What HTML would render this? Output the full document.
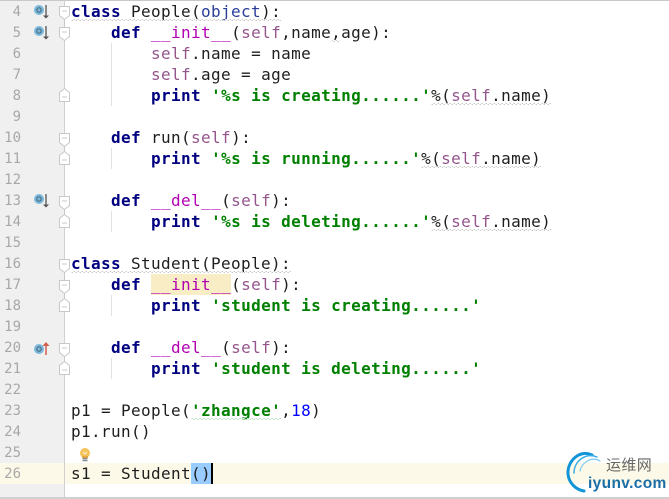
<!DOCTYPE html>
<html><head><meta charset="utf-8">
<style>
html,body{margin:0;padding:0;background:#fff;width:669px;height:499px;overflow:hidden}
#g{position:absolute;left:0;top:0;width:64px;height:497px;background:#f0f0f0;border-right:1px solid #d0d0d0}
#top{position:absolute;left:0;top:0;width:669px;height:1px;background:#c8c8c8}
#bot{position:absolute;left:0;top:497px;width:669px;height:2px;background:#d0d0d0}
#cur{position:absolute;left:65px;top:463px;width:604px;height:21px;background:#fdf9e8}
#curg{position:absolute;left:0;top:463px;width:64px;height:21px;background:#fdf9e8}
.n,.l{position:absolute;height:21px;white-space:pre}
.n{left:0;width:21px;text-align:right;font:14px/23px "DejaVu Sans Mono",monospace;color:#a8a8a8}
.l{left:71px;font-family:"DejaVu Sans Mono",monospace;font-size:16px;line-height:22px;letter-spacing:.37px;color:#1e1e1e}
.k{color:#000080;font-weight:bold}
.s{color:#008000;font-weight:bold}
.m{color:#b200b2}
.f{color:#94558d}
.o{color:#2a3d9a}
.d{color:#0000ff}
.i{position:absolute;left:111px;width:1px;background:#e2e2e2}
#hl{position:absolute;left:151px;top:274px;width:80px;height:21px;background:#f8edc5}
#br{position:absolute;left:191px;top:463px;width:20px;height:21px;background:#99ccff}
#car{position:absolute;left:211px;top:463px;width:2px;height:21px;background:#000}
svg{position:absolute;overflow:visible}
.logo1{position:absolute;left:606px;top:456px;font:15px/18px "Noto Sans CJK SC",sans-serif;color:#666;letter-spacing:.4px}
.logo2{position:absolute;left:588px;top:475px;font:bold 15.500px/18px "Liberation Sans",sans-serif;color:#1a6ea6;letter-spacing:.35px}
</style></head><body>
<div id="cur"></div>
<div id="g"></div>
<div id="curg"></div>
<div id="top"></div>
<div id="bot"></div>
<div id="hl"></div>
<div id="br"></div>
<div id="car"></div>
<div class="i" style="top:43px;height:63px"></div>
<div class="i" style="top:148px;height:21px"></div>
<div class="i" style="top:211px;height:21px"></div>
<div class="i" style="top:295px;height:21px"></div>
<div class="i" style="top:358px;height:21px"></div>

<div class="n" style="top:1px">4</div>
<div class="n" style="top:22px">5</div>
<div class="n" style="top:43px">6</div>
<div class="n" style="top:64px">7</div>
<div class="n" style="top:85px">8</div>
<div class="n" style="top:106px">9</div>
<div class="n" style="top:127px">10</div>
<div class="n" style="top:148px">11</div>
<div class="n" style="top:169px">12</div>
<div class="n" style="top:190px">13</div>
<div class="n" style="top:211px">14</div>
<div class="n" style="top:232px">15</div>
<div class="n" style="top:253px">16</div>
<div class="n" style="top:274px">17</div>
<div class="n" style="top:295px">18</div>
<div class="n" style="top:316px">19</div>
<div class="n" style="top:337px">20</div>
<div class="n" style="top:358px">21</div>
<div class="n" style="top:379px">22</div>
<div class="n" style="top:400px">23</div>
<div class="n" style="top:421px">24</div>
<div class="n" style="top:442px">25</div>
<div class="n" style="top:463px">26</div>

<div class="l" style="top:1px"><span class="k">class</span> People(<span class="o">object</span>):</div>
<div class="l" style="top:22px">    <span class="k">def</span> <span class="m">__init__</span>(<span class="f">self</span>,name,age):</div>
<div class="l" style="top:43px">        <span class="f">self</span>.name = name</div>
<div class="l" style="top:64px">        <span class="f">self</span>.age = age</div>
<div class="l" style="top:85px">        <span class="k">print</span> <span class="s">'%s is creating......'</span>%(<span class="f">self</span>.name)</div>
<div class="l" style="top:127px">    <span class="k">def</span> run(<span class="f">self</span>):</div>
<div class="l" style="top:148px">        <span class="k">print</span> <span class="s">'%s is running......'</span>%(<span class="f">self</span>.name)</div>
<div class="l" style="top:190px">    <span class="k">def</span> <span class="m">__del__</span>(<span class="f">self</span>):</div>
<div class="l" style="top:211px">        <span class="k">print</span> <span class="s">'%s is deleting......'</span>%(<span class="f">self</span>.name)</div>
<div class="l" style="top:253px"><span class="k">class</span> Student(People):</div>
<div class="l" style="top:274px">    <span class="k">def</span> <span class="m">__init__</span>(<span class="f">self</span>):</div>
<div class="l" style="top:295px">        <span class="k">print</span> <span class="s">'student is creating......'</span></div>
<div class="l" style="top:337px">    <span class="k">def</span> <span class="m">__del__</span>(<span class="f">self</span>):</div>
<div class="l" style="top:358px">        <span class="k">print</span> <span class="s">'student is deleting......'</span></div>
<div class="l" style="top:400px">p1 = People(<span class="s">'zhangce'</span>,<span class="d">18</span>)</div>
<div class="l" style="top:421px">p1.run()</div>
<div class="l" style="top:463px">s1 = Student()</div>

<svg style="left:0;top:0" width="669" height="499">
  <defs>
    <pattern id="zz" width="4" height="2" patternUnits="userSpaceOnUse"><path d="M0 0h1v1h-1zM2 1h1v1h-1z" fill="#c8c8c8"/><path d="M1 1h1v1h-1zM3 0h1v1h-1z" fill="#e6e6e6"/></pattern>
    <pattern id="zg" width="4" height="2" patternUnits="userSpaceOnUse"><path d="M0 0h1v1h-1zM2 1h1v1h-1z" fill="#b4dcb4"/><path d="M1 1h1v1h-1zM3 0h1v1h-1z" fill="#dcefdc"/></pattern>
  </defs>
  <g fill="url(#zz)">
    <rect x="71" y="19" width="210" height="2"/>
    <rect x="332" y="40" width="8" height="2"/>
    <rect x="431" y="103" width="120" height="2"/>
    <rect x="421" y="166" width="120" height="2"/>
    <rect x="431" y="229" width="120" height="2"/>
    <rect x="71" y="271" width="220" height="2"/>
  </g>
  <rect x="191" y="418" width="90" height="2" fill="url(#zg)"/>
  <g fill="#fff" stroke="#c8c8c8" stroke-width="1">
    <path d="M59.500 6.500h10v9l-5 4l-5-4z"/><path d="M62 11h5" />
    <path d="M59.500 27.500h10v9l-5 4l-5-4z"/><path d="M62 32h5"/>
    <path d="M59.500 101.500h10v-9l-5-4l-5 4z"/><path d="M62 97h5"/>
    <path d="M59.500 133.500h10v9l-5 4l-5-4z"/><path d="M62 138h5"/>
    <path d="M59.500 164.500h10v-9l-5-4l-5 4z"/><path d="M62 160h5"/>
    <path d="M59.500 196.500h10v9l-5 4l-5-4z"/><path d="M62 201h5"/>
    <path d="M59.500 227.500h10v-9l-5-4l-5 4z"/><path d="M62 223h5"/>
    <path d="M59.500 259.500h10v9l-5 4l-5-4z"/><path d="M62 264h5"/>
    <path d="M59.500 280.500h10v9l-5 4l-5-4z"/><path d="M62 285h5"/>
    <path d="M59.500 311.500h10v-9l-5-4l-5 4z"/><path d="M62 307h5"/>
    <path d="M59.500 343.500h10v9l-5 4l-5-4z"/><path d="M62 348h5"/>
    <path d="M59.500 374.500h10v-9l-5-4l-5 4z"/><path d="M62 370h5"/>
  </g>
  <path d="M64.500 19v9M64.500 146v6M64.500 209v6M64.500 272v9M64.500 293v6M64.500 356v6" stroke="#c8c8c8" fill="none"/>
  <g>
    <g><circle cx="39" cy="10" r="5" fill="#7ab8dc"/><circle cx="39" cy="10" r="2.200" fill="none" stroke="#47606e"/><path d="M46 5v12" stroke="#555" stroke-width="1.300"/><path d="M43 15.500h6l-3 3z" fill="#555"/></g>
    <g transform="translate(0,21)"><circle cx="39" cy="10" r="5" fill="#7ab8dc"/><circle cx="39" cy="10" r="2.200" fill="none" stroke="#47606e"/><path d="M46 5v12" stroke="#555" stroke-width="1.300"/><path d="M43 15.500h6l-3 3z" fill="#555"/></g>
    <g transform="translate(0,189)"><circle cx="39" cy="10" r="5" fill="#7ab8dc"/><circle cx="39" cy="10" r="2.200" fill="none" stroke="#47606e"/><path d="M46 5v12" stroke="#555" stroke-width="1.300"/><path d="M43 15.500h6l-3 3z" fill="#555"/></g>
    <g><circle cx="39" cy="349" r="5" fill="#7ab8dc"/><circle cx="39" cy="349" r="2.200" fill="none" stroke="#47606e"/><path d="M46 343v12" stroke="#d0604c" stroke-width="1.500"/><path d="M42.500 346h7l-3.500-4z" fill="#d0604c"/></g>
  </g>
  <circle cx="85" cy="453" r="5" fill="#f5c35a"/>
  <path d="M82 456h6v2h-6z" fill="#e8a93c"/>
  <path d="M82.500 458.500h5M82.500 460.500h5" stroke="#8a8a8a" stroke-width="1.400"/>
  <path d="M83 452l2 2l2-2" stroke="#fff" fill="none" stroke-width=".8"/>
  <g fill="none" stroke-linecap="round">
    <path d="M592 455C580 449 567 461 568 474C569 484 577 490 584 491" stroke="#1295d8" stroke-width="3"/>
    <path d="M597 457C586 452 574 461 574 473" stroke="#38ace4" stroke-width="1.500"/>
    <path d="M600 461C592 456 582 462 580 471" stroke="#7ccbf0" stroke-width="1.200"/>
  </g>
</svg>
<div class="logo1">运维网</div>
<div class="logo2">iyunv.com</div>
</body></html>
